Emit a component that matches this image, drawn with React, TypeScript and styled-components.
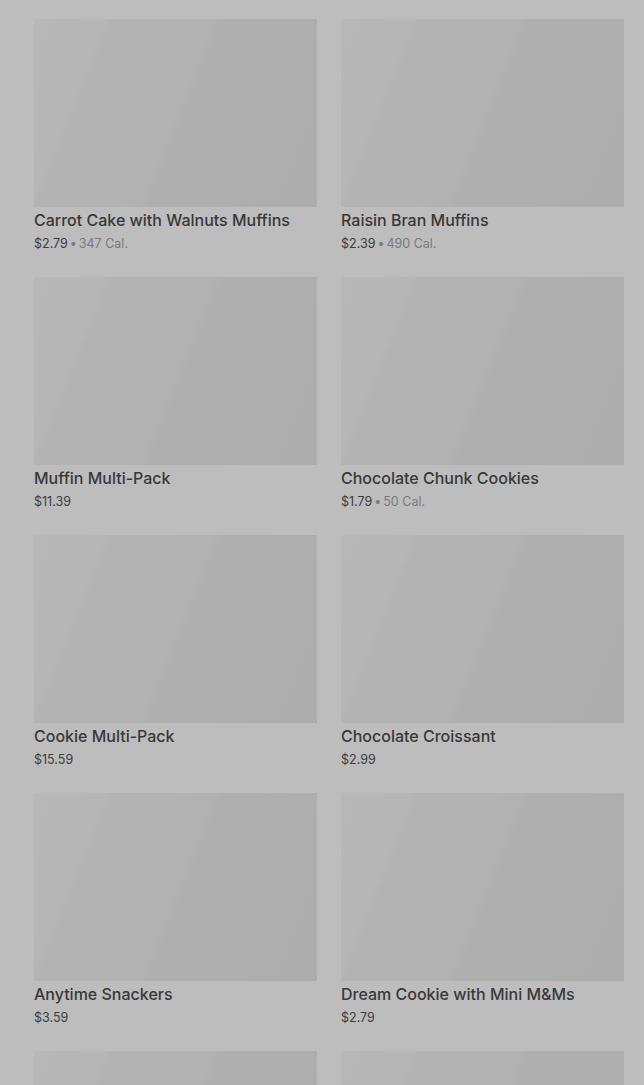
import React from "react";
import styled, { createGlobalStyle } from "styled-components";

const Global = createGlobalStyle`
  html, body { margin: 0; padding: 0; background: #bdbdbd; }
  body { font-family: Inter, "Noto Sans", Roboto, sans-serif; overflow: hidden; }
`;

const Grid = styled.div`
  display: grid;
  grid-template-columns: 283px 283px;
  column-gap: 24px;
  row-gap: 23px;
  padding: 19px 20px 0 34px;
`;

const Card = styled.div`
  display: flex;
  flex-direction: column;
`;

const Thumb = styled.div`
  height: 188px;
  background: linear-gradient(112deg, #b8b8b8 0%, #b6b6b6 20%, #b3b3b3 22%, #b2b2b2 50%, #afafaf 53%, #adadad 100%);
`;

const Title = styled.div`
  margin-top: 1px;
  font-size: 16px;
  line-height: 24px;
  font-weight: 500;
  color: #383838;
  white-space: nowrap;
`;

const Meta = styled.div`
  margin-top: 2px;
  font-size: 12.5px;
  line-height: 20px;
  color: #3c3c3c;
  white-space: nowrap;
`;

const Dot = styled.span`
  margin: 0 2px;
  color: #7a7a7a;
`;

const Cal = styled.span`
  color: #7a7a7a;
`;

type Item = { name: string; price: string; cal?: string };

const items: Item[] = [
  { name: "Carrot Cake with Walnuts Muffins", price: "$2.79", cal: "347 Cal." },
  { name: "Raisin Bran Muffins", price: "$2.39", cal: "490 Cal." },
  { name: "Muffin Multi-Pack", price: "$11.39" },
  { name: "Chocolate Chunk Cookies", price: "$1.79", cal: "50 Cal." },
  { name: "Cookie Multi-Pack", price: "$15.59" },
  { name: "Chocolate Croissant", price: "$2.99" },
  { name: "Anytime Snackers", price: "$3.59" },
  { name: "Dream Cookie with Mini M&Ms", price: "$2.79" },
  { name: "", price: "" },
  { name: "", price: "" },
];

export default function App() {
  return (
    <>
      <Global />
      <Grid>
        {items.map((it, i) => (
          <Card key={i}>
            <Thumb />
            <Title>{it.name}</Title>
            <Meta>
              {it.price}
              {it.cal && (
                <>
                  <Dot>•</Dot>
                  <Cal>{it.cal}</Cal>
                </>
              )}
            </Meta>
          </Card>
        ))}
      </Grid>
    </>
  );
}
